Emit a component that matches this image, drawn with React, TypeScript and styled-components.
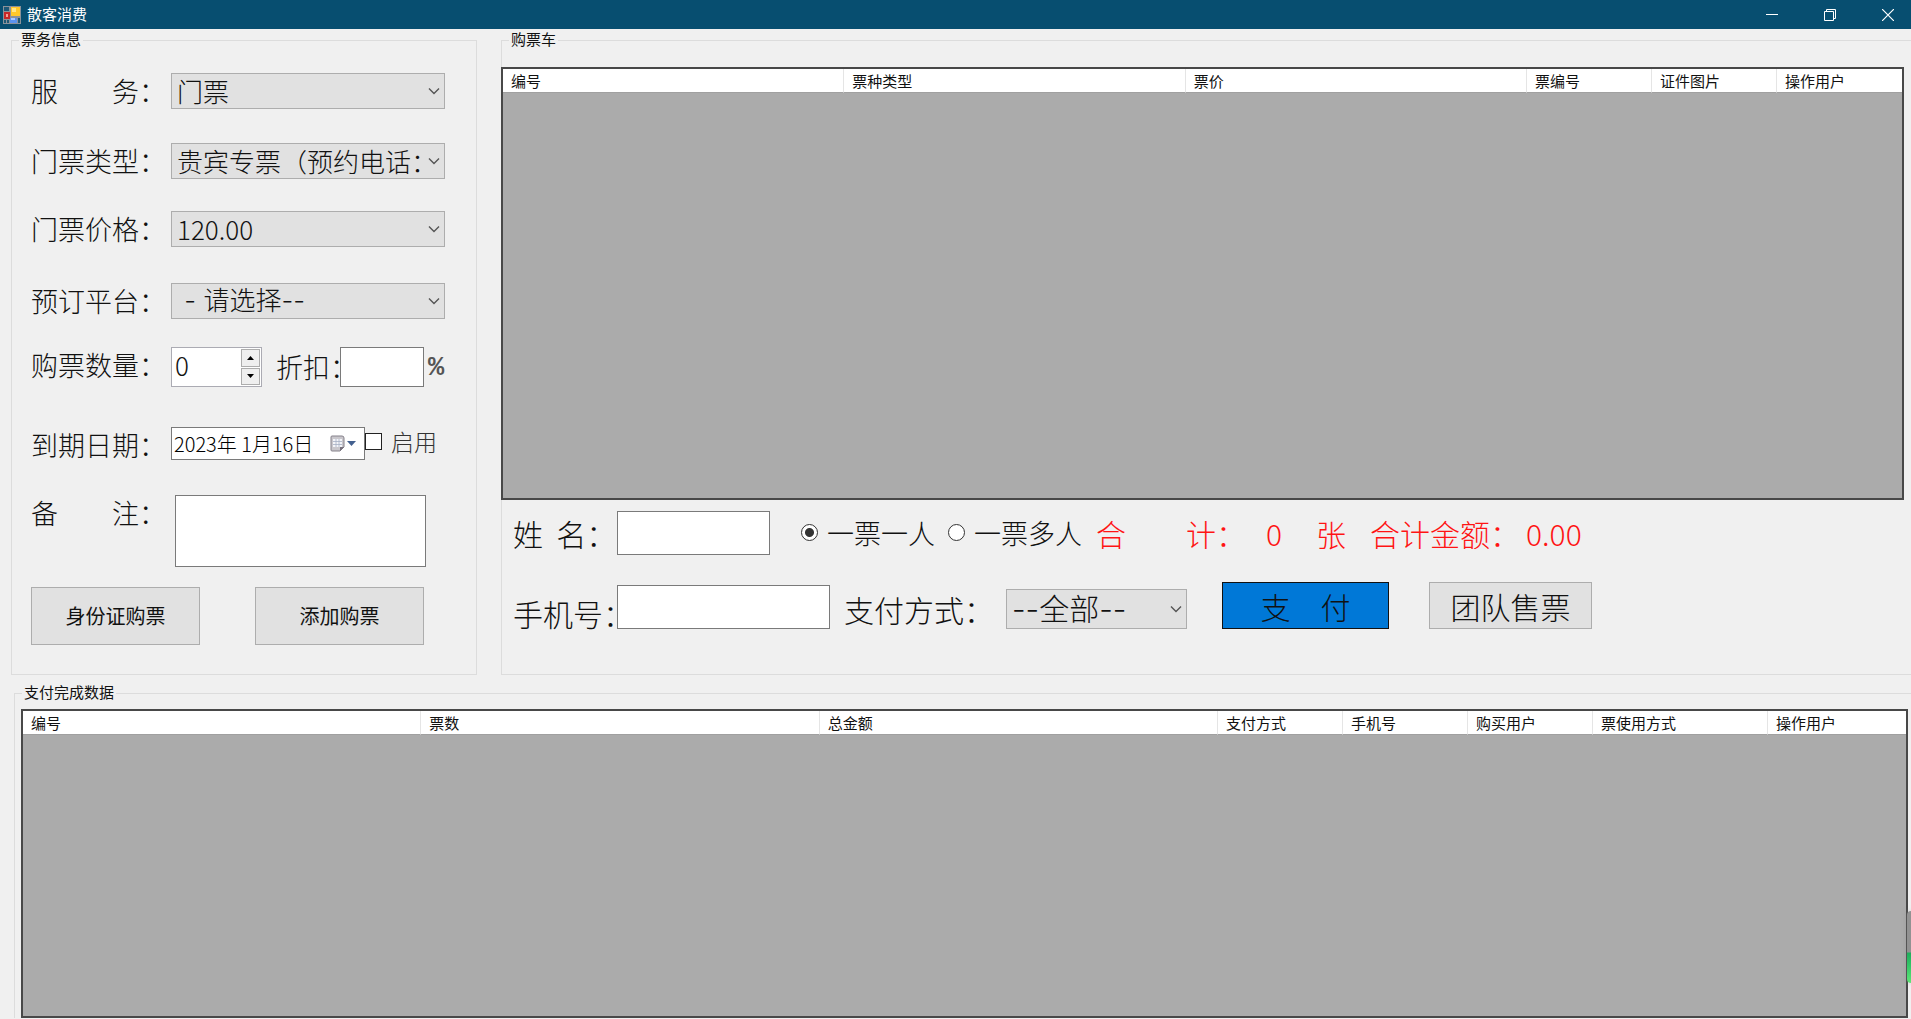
import React, { useState } from 'react';
import styled, { createGlobalStyle, css } from 'styled-components';

const CJK = '"Noto Sans CJK SC", sans-serif';
const CJK_WIDE_DASH = 'Inter, "Noto Sans CJK SC", sans-serif';

const GlobalStyle = createGlobalStyle`
  *, *::before, *::after { box-sizing: border-box; }
  body {
    margin: 0;
    background: #f0f0f0;
    color: #111;
    font-family: ${CJK};
    font-weight: 300;
  }
  button, input, select, textarea {
    font: inherit;
    color: inherit;
    margin: 0;
    border-radius: 0;
  }
`;

const Window = styled.div`
  position: relative;
  display: grid;
  grid-template-rows: auto 1fr;
  min-height: 100vh;
  overflow: hidden;
`;

const TitleBar = styled.header`
  display: flex;
  align-items: center;
  height: 29px;
  padding-left: 3px;
  background: #074e70;
  color: #fff;
`;

const Title = styled.h1`
  flex: 1;
  margin: 0 0 2px 6px;
  font-size: 15px;
  line-height: 26px;
  font-weight: 400;
`;

const WindowButtons = styled.div`
  display: flex;
  gap: 12px;
`;

const WindowButton = styled.button`
  display: flex;
  align-items: center;
  justify-content: center;
  width: 46px;
  height: 28px;
  padding: 0;
  border: 0;
  background: transparent;
  color: #fff;
`;

const Body = styled.main`
  display: grid;
  grid-template-rows: auto 1fr;
  grid-template-columns: minmax(0, 1fr);
  gap: 9px;
  padding: 2px 0 1px 11px;
`;

const TopRow = styled.div`
  display: flex;
  gap: 24px;
`;

const Group = styled.fieldset<{ $bleed?: boolean }>`
  display: flex;
  flex-direction: column;
  min-width: 0;
  margin: 0;
  padding: 0;
  border: 1px solid #dcdcdc;
  ${(p) => p.$bleed && css`border-right: 0;`}
`;

const Legend = styled.legend`
  margin-left: 7px;
  padding: 0 2px 2px;
  font-size: 15px;
  line-height: 16px;
  font-weight: 400;
`;

const TicketGroup = styled(Group)`
  flex: 0 0 466px;
`;

const CartGroup = styled(Group)`
  flex: 1;
`;

const PaidGroup = styled(Group)`
  margin-left: 3px;
  border-bottom: 0;
`;

const TicketForm = styled.div`
  display: grid;
  grid-template-rows: 70px 68px 72px 64px 80px 68px 92px auto;
  padding: 24px 28px 29px 19px;
`;

const Field = styled.div`
  display: flex;
  align-items: flex-start;
`;

const FieldLabel = styled.label`
  flex: 0 0 140px;
  min-width: 0;
  font-size: 27px;
  line-height: 36px;
  white-space: pre;
`;

const boxed = css`
  border: 1px solid #7a7a7a;
  background: #fff;
  outline: none;
`;

const SelectBox = styled.div<{ $width: number; $large?: boolean }>`
  position: relative;
  flex: 0 0 ${(p) => p.$width}px;
  height: ${(p) => (p.$large ? 40 : 36)}px;
  font-size: ${(p) => (p.$large ? 30 : 26)}px;

  svg {
    position: absolute;
    top: 50%;
    right: 5px;
    margin-top: -4px;
    pointer-events: none;
  }
`;

const Select = styled.select<{ $dashed?: boolean }>`
  appearance: none;
  display: block;
  width: 100%;
  height: 100%;
  padding: 0 16px 0 5px;
  border: 1px solid #adadad;
  background: #e1e1e1;
  font-family: ${(p) => (p.$dashed ? CJK_WIDE_DASH : CJK)};
  line-height: 34px;
  outline: none;
`;

const Spinner = styled.div`
  display: flex;
  flex: 0 0 91px;
  min-width: 0;
  height: 40px;
  padding: 1px;
  border: 1px solid #ababb3;
  background: #fff;
`;

const SpinnerInput = styled.input`
  flex: 1;
  min-width: 0;
  height: 32px;
  padding: 0 0 0 2px;
  border: 0;
  background: transparent;
  font-size: 26px;
  line-height: 32px;
  outline: none;
  appearance: textfield;
  &::-webkit-inner-spin-button { appearance: none; margin: 0; }
`;

const SpinnerButtons = styled.div`
  display: flex;
  flex-direction: column;
  width: 19px;
  gap: 1px;
`;

const StepButton = styled.button`
  flex: 1;
  display: flex;
  align-items: center;
  justify-content: center;
  padding: 0;
  border: 1px solid #adadad;
  background: #efefef;
`;

const DiscountLabel = styled.label`
  flex: 0 0 64px;
  min-width: 0;
  margin-left: 14px;
  font-size: 27px;
  line-height: 40px;
  white-space: nowrap;
`;

const DiscountInput = styled.input`
  ${boxed}
  position: relative;
  flex: 0 0 84px;
  min-width: 0;
  height: 40px;
`;

const Percent = styled.span`
  margin-left: 4px;
  color: #555;
  font-family: "Liberation Mono", monospace;
  font-size: 27px;
  line-height: 42px;
  font-weight: 700;
`;

const DateBox = styled.div`
  ${boxed}
  display: flex;
  align-items: center;
  flex: 0 0 194px;
  min-width: 0;
  height: 33px;
`;

const DateInput = styled.input`
  flex: 1;
  min-width: 0;
  height: 30px;
  padding: 0 0 0 2px;
  border: 0;
  background: transparent;
  color: #000;
  font-size: 20px;
  outline: none;
`;

const CalendarButton = styled.button`
  display: flex;
  padding: 0 7px 0 0;
  border: 0;
  background: transparent;
`;

const EnableLabel = styled.label`
  display: flex;
  align-items: center;
  gap: 9px;
  font-size: 23px;
  line-height: 28px;
  color: #333;
  white-space: nowrap;
`;

const CheckBox = styled.input`
  appearance: none;
  width: 17px;
  height: 17px;
  border: 1px solid #222;
  background: #fff;
  &:checked { box-shadow: inset 0 0 0 3px #fff; background: #222; }
`;

const Remark = styled.textarea`
  ${boxed}
  width: 251px;
  height: 72px;
  margin-left: 4px;
  resize: none;
  font-size: 20px;
`;

const ActionRow = styled.div`
  display: flex;
  gap: 55px;
`;

const Button = styled.button<{ $width: number; $height: number; $large?: boolean; $primary?: boolean }>`
  width: ${(p) => p.$width}px;
  height: ${(p) => p.$height}px;
  padding: 0;
  border: 1px solid ${(p) => (p.$primary ? '#111' : '#adadad')};
  background: ${(p) => (p.$primary ? '#0078d7' : '#e1e1e1')};
  font-size: ${(p) => (p.$large ? 30 : 20)}px;
  font-weight: ${(p) => (p.$large ? 300 : 400)};
  line-height: 36px;
  white-space: pre;
`;

const GridBox = styled.div`
  flex: 1;
  border: 2px solid #484848;
  background: #ababab;
`;

const CartGrid = styled(GridBox)`
  margin: 18px 7px 11px -1px;
`;

const PaidGrid = styled(GridBox)`
  margin: 7px 3px 0 6px;
`;

const Table = styled.table`
  width: 100%;
  table-layout: fixed;
  border-collapse: separate;
  border-spacing: 0;
  background: #fff;
`;

const Th = styled.th<{ $width?: number }>`
  width: ${(p) => (p.$width ? `${p.$width}px` : 'auto')};
  height: 24px;
  padding: 0 0 0 8px;
  border-right: 1px solid #e5e5e5;
  border-bottom: 1px solid #a0a0a0;
  font-size: 15px;
  line-height: 22px;
  font-weight: 400;
  text-align: left;
  white-space: nowrap;
  &:last-child { border-right: 0; }
`;

const Checkout = styled.div`
  display: flex;
  flex-direction: column;
  gap: 28px;
  padding: 0 0 45px 11px;
  font-size: 30px;
  line-height: 32px;
`;

const NameRow = styled.div`
  display: flex;
  align-items: center;
  height: 43px;
`;

const PayRow = styled.div`
  display: flex;
  align-items: flex-end;
`;

const CheckoutLabel = styled.label`
  flex: 0 0 104px;
  min-width: 0;
  white-space: pre;
`;

const TextBox = styled.input<{ $width: number }>`
  ${boxed}
  position: relative;
  width: ${(p) => p.$width}px;
  height: 44px;
  padding: 0 6px;
`;

const Radios = styled.div`
  display: flex;
  gap: 13px;
  margin: 0 14px 0 31px;
  font-size: 27px;
`;

const RadioLabel = styled.label`
  display: flex;
  align-items: center;
  gap: 9px;
`;

const Radio = styled.input`
  appearance: none;
  width: 17px;
  height: 17px;
  border: 1px solid #333;
  border-radius: 50%;
  background: #fff;
  &:checked { background: radial-gradient(circle, #333 0 4px, #fff 5px); }
`;

const Totals = styled.div`
  display: flex;
  color: #ff1414;
  white-space: pre;
`;

const Count = styled.output`
  padding: 0 34px 0 20px;
`;

const Amount = styled.output`
  padding-left: 6px;
`;

const AmountLabel = styled.span`
  margin-left: 24px;
`;

const PayMethod = styled.div`
  display: flex;
  align-items: center;
  margin: 0 35px 0 14px;
`;

const PayMethodLabel = styled.label`
  flex: 0 0 162px;
`;

const PayButtons = styled.div`
  display: flex;
  gap: 40px;
`;

const EdgeWidget = styled.aside`
  position: absolute;
  right: 0;
  bottom: 36px;
  width: 4px;
  height: 72px;
  border-radius: 4px 0 0 4px;
  background: linear-gradient(#929292 0 41px, #1fae5c 42px, #35c768 55px, #5fe676 72px);
  box-shadow: 0 0 5px #8888;
`;

const AppIcon = () => (
  <svg width="18" height="18" viewBox="0 0 18 18" aria-hidden="true">
    <rect width="18" height="18" fill="#8b9299" />
    <rect x="1" y="1" width="5" height="4" fill="#1d5876" />
    <rect x="1" y="6" width="6" height="7" fill="#c72828" />
    <rect x="3" y="8" width="2" height="3" fill="#f3a095" />
    <rect x="8" y="1" width="9" height="9" fill="#ffc829" />
    <rect x="9" y="2" width="4" height="4" fill="#ffe685" />
    <rect x="1" y="14" width="2" height="3" fill="#1d5876" />
    <rect x="4" y="14" width="2" height="3" fill="#1d5876" />
    <rect x="7" y="12" width="7" height="5" fill="#5b93ee" />
    <rect x="8" y="12" width="4" height="2" fill="#a9c8ff" />
    <rect x="15" y="12" width="2" height="5" fill="#1d5876" />
  </svg>
);

const Chevron = () => (
  <svg width="12" height="8" viewBox="0 0 12 8" fill="none" stroke="#555" strokeWidth="1.4" aria-hidden="true">
    <path d="M1 1.5 6 6.5 11 1.5" />
  </svg>
);

const CalendarIcon = () => (
  <svg width="27" height="18" viewBox="0 0 27 18" aria-hidden="true">
    <path d="M2 1h10q2 0 2 2v9l-4 4H2q-1 0-1-1V2q0-1 1-1z" fill="#c9c7cc" stroke="#85818a" />
    <path d="M3 4h9v8H3z" fill="#f3f4f8" />
    <path d="M3 6.5h9M3 9.5h9M6 4v8M9 4v8" stroke="#a6b0c4" strokeWidth="0.8" />
    <path d="M14 12l-4 4v-4z" fill="#77717c" />
    <path d="M17 6h9l-4.5 5z" fill="#43608f" />
  </svg>
);

type ComboProps = { id: string; width: number; options: string[]; large?: boolean; dashed?: boolean };

const Combo = ({ id, width, options, large, dashed }: ComboProps) => (
  <SelectBox $width={width} $large={large}>
    <Select id={id} $dashed={dashed}>
      {options.map((o) => (
        <option key={o}>{o}</option>
      ))}
    </Select>
    <Chevron />
  </SelectBox>
);

type Column = { name: string; width?: number };

const cartColumns: Column[] = [
  { name: '编号' },
  { name: '票种类型' },
  { name: '票价' },
  { name: '票编号', width: 125 },
  { name: '证件图片', width: 125 },
  { name: '操作用户', width: 125 },
];

const paidColumns: Column[] = [
  { name: '编号' },
  { name: '票数' },
  { name: '总金额' },
  { name: '支付方式', width: 125 },
  { name: '手机号', width: 125 },
  { name: '购买用户', width: 125 },
  { name: '票使用方式', width: 175 },
  { name: '操作用户', width: 138 },
];

const DataTable = ({ columns }: { columns: Column[] }) => (
  <Table>
    <thead>
      <tr>
        {columns.map((c) => (
          <Th key={c.name} $width={c.width} scope="col">
            {c.name}
          </Th>
        ))}
      </tr>
    </thead>
  </Table>
);

const combos = [
  { id: 'service', label: '服\u3000\u3000务：', options: ['门票'] },
  { id: 'type', label: '门票类型：', options: ['贵宾专票（预约电话：'] },
  { id: 'price', label: '门票价格：', options: ['120.00'] },
  { id: 'platform', label: '预订平台：', options: ['\u00a0- 请选择--'], dashed: true },
];

export default function App() {
  const [quantity, setQuantity] = useState(0);
  const [mode, setMode] = useState('single');

  return (
    <>
      <GlobalStyle />
      <Window>
        <TitleBar>
          <AppIcon />
          <Title>散客消费</Title>
          <WindowButtons>
            <WindowButton aria-label="最小化">
              <svg width="12" height="12" viewBox="0 0 12 12" stroke="currentColor">
                <path d="M0 5.5h12" />
              </svg>
            </WindowButton>
            <WindowButton aria-label="还原">
              <svg width="12" height="12" viewBox="0 0 12 12" fill="none" stroke="currentColor">
                <path d="M.5 2.5h9v9h-9zM2.5 2.5v-2h9v9h-2" />
              </svg>
            </WindowButton>
            <WindowButton aria-label="关闭">
              <svg width="12" height="12" viewBox="0 0 12 12" stroke="currentColor" strokeWidth="1.2">
                <path d="M0 0 12 12M12 0 0 12" />
              </svg>
            </WindowButton>
          </WindowButtons>
        </TitleBar>

        <Body>
          <TopRow>
            <TicketGroup>
              <Legend>票务信息</Legend>
              <TicketForm>
                {combos.map((c) => (
                  <Field key={c.id}>
                    <FieldLabel htmlFor={c.id}>{c.label}</FieldLabel>
                    <Combo id={c.id} width={274} options={c.options} dashed={c.dashed} />
                  </Field>
                ))}
                <Field>
                  <FieldLabel htmlFor="quantity">购票数量：</FieldLabel>
                  <Spinner>
                    <SpinnerInput
                      id="quantity"
                      type="number"
                      min={0}
                      value={quantity}
                      onChange={(e) => setQuantity(Number(e.target.value))}
                    />
                    <SpinnerButtons>
                      <StepButton aria-label="增加" onClick={() => setQuantity(quantity + 1)}>
                        <svg width="7" height="4" viewBox="0 0 7 4"><path d="M0 4 3.5 0 7 4z" /></svg>
                      </StepButton>
                      <StepButton aria-label="减少" onClick={() => setQuantity(Math.max(0, quantity - 1))}>
                        <svg width="7" height="4" viewBox="0 0 7 4"><path d="M0 0 3.5 4 7 0z" /></svg>
                      </StepButton>
                    </SpinnerButtons>
                  </Spinner>
                  <DiscountLabel htmlFor="discount">折扣：</DiscountLabel>
                  <DiscountInput id="discount" type="text" />
                  <Percent>%</Percent>
                </Field>
                <Field>
                  <FieldLabel htmlFor="expiry">到期日期：</FieldLabel>
                  <DateBox>
                    <DateInput id="expiry" type="text" defaultValue="2023年 1月16日" />
                    <CalendarButton aria-label="选择日期">
                      <CalendarIcon />
                    </CalendarButton>
                  </DateBox>
                  <EnableLabel>
                    <CheckBox type="checkbox" />
                    启用
                  </EnableLabel>
                </Field>
                <Field>
                  <FieldLabel htmlFor="remark">{'备\u3000\u3000注：'}</FieldLabel>
                  <Remark id="remark" />
                </Field>
                <ActionRow>
                  <Button $width={169} $height={58}>身份证购票</Button>
                  <Button $width={169} $height={58}>添加购票</Button>
                </ActionRow>
              </TicketForm>
            </TicketGroup>

            <CartGroup $bleed>
              <Legend>购票车</Legend>
              <CartGrid>
                <DataTable columns={cartColumns} />
              </CartGrid>
              <Checkout>
                <NameRow>
                  <CheckoutLabel htmlFor="name">{'姓  名：'}</CheckoutLabel>
                  <TextBox id="name" type="text" $width={153} />
                  <Radios>
                    <RadioLabel>
                      <Radio type="radio" name="mode" checked={mode === 'single'} onChange={() => setMode('single')} />
                      一票一人
                    </RadioLabel>
                    <RadioLabel>
                      <Radio type="radio" name="mode" checked={mode === 'multi'} onChange={() => setMode('multi')} />
                      一票多人
                    </RadioLabel>
                  </Radios>
                  <Totals>
                    <span>{'合\u3000\u3000计：'}</span>
                    <Count>0</Count>
                    <span>张</span>
                    <AmountLabel>合计金额：</AmountLabel>
                    <Amount>0.00</Amount>
                  </Totals>
                </NameRow>
                <PayRow>
                  <CheckoutLabel htmlFor="phone">手机号：</CheckoutLabel>
                  <TextBox id="phone" type="text" $width={213} />
                  <PayMethod>
                    <PayMethodLabel htmlFor="method">支付方式：</PayMethodLabel>
                    <Combo id="method" width={181} options={['--全部--']} large dashed />
                  </PayMethod>
                  <PayButtons>
                    <Button $width={167} $height={47} $large $primary>{'支\u3000付'}</Button>
                    <Button $width={163} $height={47} $large>团队售票</Button>
                  </PayButtons>
                </PayRow>
              </Checkout>
            </CartGroup>
          </TopRow>

          <PaidGroup $bleed>
            <Legend>支付完成数据</Legend>
            <PaidGrid>
              <DataTable columns={paidColumns} />
            </PaidGrid>
          </PaidGroup>
        </Body>
        <EdgeWidget />
      </Window>
    </>
  );
}
